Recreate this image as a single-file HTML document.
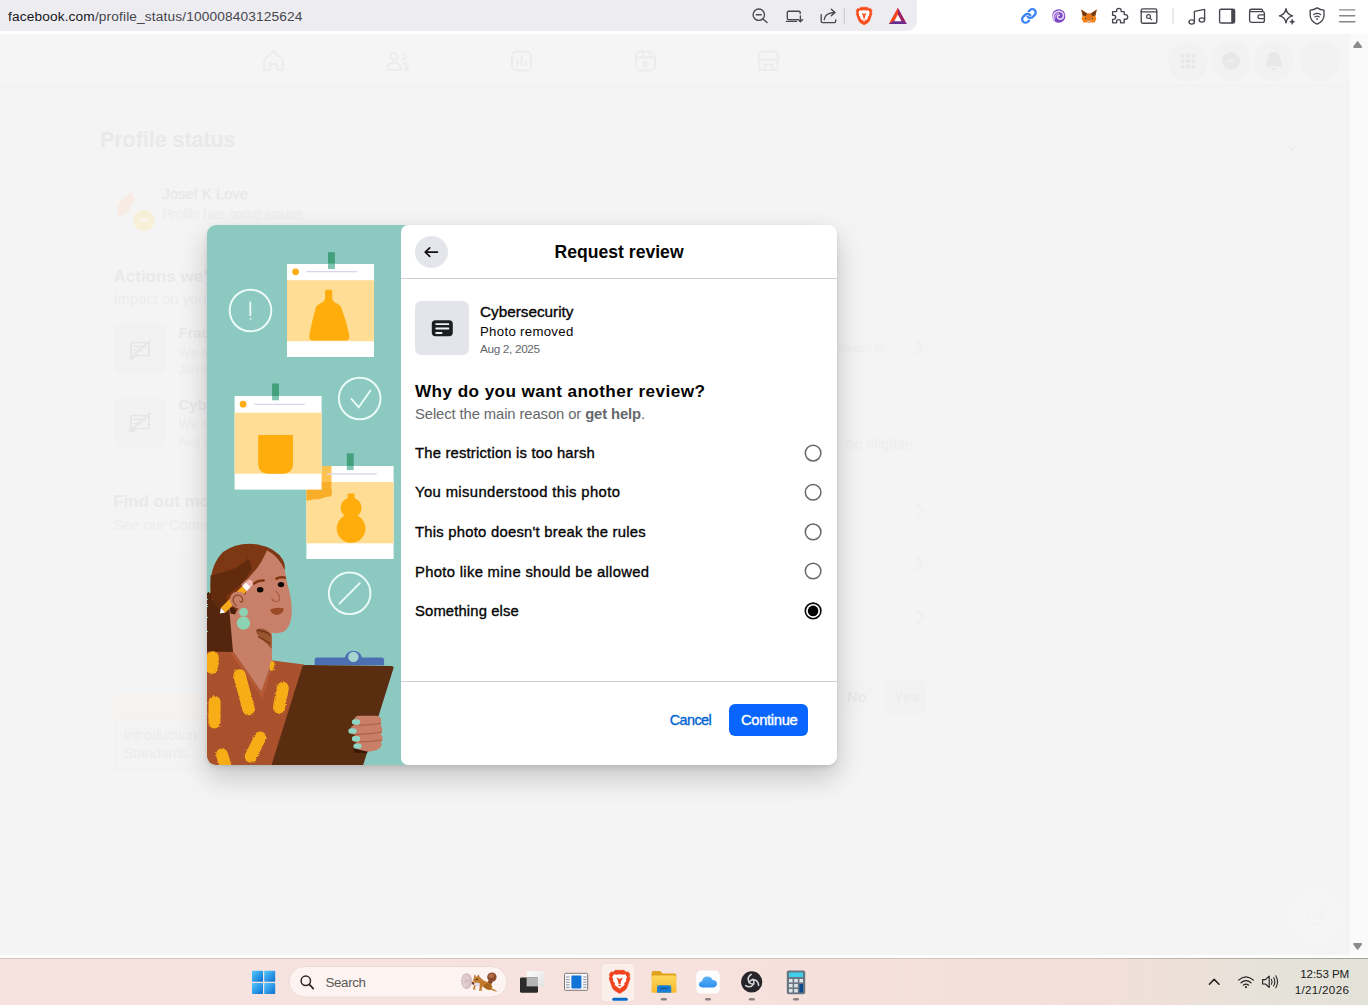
<!DOCTYPE html>
<html lang="en">
<head>
<meta charset="utf-8">
<title>Request review</title>
<style>
*{box-sizing:border-box;margin:0;padding:0}
html,body{width:1368px;height:1005px;overflow:hidden;background:#fdfdfd;font-family:"Liberation Sans",sans-serif;}
body{position:relative}
.abs{position:absolute}
.t{position:absolute;white-space:nowrap;line-height:1;transform-origin:0 0}
/* browser chrome */
#chrome{position:absolute;left:0;top:0;width:1368px;height:34px;background:#fff}
#urlbar{position:absolute;left:0;top:0;width:917px;height:31px;background:#edecf1;border-radius:0 0 10px 0}
/* page */
#page{position:absolute;left:0;top:34px;width:1350px;height:921px;background:#f4f4f4;overflow:hidden}
#scroll{position:absolute;left:1350px;top:34px;width:18px;height:921px;background:#fafafa}
.faint{color:#e9e9e9}
/* modal */
#modal{position:absolute;left:207px;top:225px;width:630px;height:540px;border-radius:9px;background:#fff;box-shadow:0 12px 28px rgba(0,0,0,.2),0 2px 4px rgba(0,0,0,.1);overflow:hidden}
#left{position:absolute;left:0;top:0;width:206px;height:540px;background:#8ccac1}
#right{position:absolute;left:194px;top:0;width:436px;height:540px;background:#fff;border-radius:7px}
.hr{position:absolute;left:0;width:436px;height:1px;background:#ced0d4}
.radio{position:absolute;left:597.5px;width:17.2px;height:17.2px;border-radius:50%;border:1.5px solid #65676b;background:#fff}
.radio.on{border:1.6px solid #0a0a0a}
.radio.on::after{content:"";position:absolute;left:1.7px;top:1.7px;width:10.6px;height:10.6px;border-radius:50%;background:#000}
.opt{font-size:14.8px;color:#050505;-webkit-text-stroke:.35px #050505}
/* taskbar */
#taskbar{position:absolute;left:0;top:958px;width:1368px;height:47px;background:linear-gradient(90deg,#f6e3df 0%,#f6e1dd 55%,#f3dfda 80%,#ebe1d9 88%,#e5e2d9 94%,#e3e2d9 100%);}
</style>
</head>
<body>
<!-- ============ BROWSER CHROME ============ -->
<div id="chrome">
  <div id="urlbar"></div>
  <span class="t" id="url" style="letter-spacing:0.14px;left:8px;top:10px;font-size:13.7px;color:#46464d"><span style="color:#17171c">facebook.com</span>/profile_status/100008403125624</span>
  <!--C-START--><svg class="abs" style="left:0;top:0" width="1368" height="34" viewBox="0 0 1368 34">
  <g fill="none" stroke="#46464e" stroke-width="1.35" stroke-linecap="round" stroke-linejoin="round">
    <!-- zoom out -->
    <circle cx="758.8" cy="14.7" r="5.7"/><path d="M763 19L767 22.6M756.3 14.7H761.3"/>
    <!-- cast / install -->
    <path d="M798 19.6H788.6Q787.3 19.6 787.3 18.3V12.5Q787.3 11.2 788.6 11.2H798.9Q800.2 11.2 800.2 12.5V13.6M786.4 21.4H796.6M800.4 15.8V21.6M798.2 19.6L800.4 21.8L802.6 19.6"/>
    <!-- share -->
    <path d="M821.2 14.6V21.3Q821.2 22.6 822.5 22.6H834.4Q835.7 22.6 835.7 21.3V19.8M824.2 19.6Q825 13 834.4 12.5M831.3 9.2L835 12.5L831.3 15.8"/>
  </g>
  <rect x="843.8" y="8.2" width="1" height="15.6" fill="#c4c4cc"/>
  <!-- brave lion -->
  <path d="M860.600 7.200H867.600L868.900 8.700L870.600 8.400L872 10.400L871.500 12L872.100 13.600L869.600 20.600Q869 22 867.800 22.800L864.100 25L860.400 22.800Q859.200 22 858.600 20.600L856.100 13.600L856.700 12L856.200 10.400L857.600 8.400L859.300 8.700Z" fill="#fb4c1e" stroke="#fb4c1e" stroke-width=".5" stroke-linejoin="round"/>
  <path d="M864.100 10.200L866.600 10.600L868.400 10.300L869.800 12.400L869 14L869.300 15.200L867.600 17.400L867.900 18.600L864.100 21.400L860.300 18.600L860.600 17.400L858.900 15.200L859.200 14L858.400 12.400L859.800 10.300L861.600 10.600Z" fill="#fff"/>
  <path d="M861.600 12.700L864.100 13.900L866.600 12.700L865.300 15.400L864.800 18H863.400L862.900 15.400Z" fill="#fb4c1e"/>
  <path d="M862.700 19L864.100 18.400L865.500 19L864.100 19.700Z" fill="#fb4c1e"/>
  <!-- BAT -->
  <path d="M897.9 7.8L889 24H906.8Z" fill="#9e1f63"/>
  <path d="M897.9 7.8L889 24L897.9 18.4Z" fill="#ff4a1c"/>
  <path d="M889 24H906.8L897.9 18.4Z" fill="#662d91"/>
  <path d="M897.9 14.4L894.3 21.2H901.5Z" fill="#fff"/>
  <!-- link -->
  <g transform="translate(1020.700 7.700) scale(.685)" fill="none" stroke="#3b82f6" stroke-width="3.300" stroke-linecap="round" stroke-linejoin="round">
    <path d="M10 13a5 5 0 0 0 7.540 .540l3-3a5 5 0 0 0-7.070-7.070l-1.720 1.710"/>
    <path d="M14 11a5 5 0 0 0-7.540-.540l-3 3a5 5 0 0 0 7.070 7.070l1.710-1.710"/>
  </g>
  <!-- swirl -->
  <circle cx="1058.7" cy="16" r="6.7" fill="#7a44c2"/>
  <path d="M1053 19.5Q1052.5 12 1058.4 11.2Q1063 11.2 1063.6 15.4Q1063.4 19 1060 19.2Q1057.4 18.8 1057.4 16.6Q1057.8 15 1059.4 15.2" fill="none" stroke="#e6d9f7" stroke-width="1.5" stroke-linecap="round"/>
  <path d="M1054.6 21.4Q1054 14.6 1058.6 13.4" fill="none" stroke="#c9b2ee" stroke-width="1.1" stroke-linecap="round"/>
  <!-- fox -->
  <path d="M1081.2 9.4L1087.2 13.6H1090.8L1096.8 9.4L1095.4 15.6L1096.4 19L1094.4 22.8L1090.6 22.2L1089.8 23H1088.2L1087.4 22.2L1083.6 22.8L1081.6 19L1082.6 15.6Z" fill="#f6851b"/>
  <path d="M1081.2 9.4L1087.2 13.6L1086 16.6L1082.6 15.6Z" fill="#763d16"/>
  <path d="M1096.8 9.4L1090.8 13.6L1092 16.6L1095.4 15.6Z" fill="#763d16"/>
  <path d="M1086 16.6L1087.2 13.6H1090.8L1092 16.6L1090.6 20.8H1087.4Z" fill="#e2761b"/>
  <path d="M1087.4 20.8H1090.6L1090.2 22.6H1087.8Z" fill="#d7c1b3"/>
  <circle cx="1085.6" cy="18.6" r=".7" fill="#233447"/><circle cx="1092.4" cy="18.6" r=".7" fill="#233447"/>
  <g fill="none" stroke="#46464e" stroke-width="1.35" stroke-linecap="round" stroke-linejoin="round">
    <!-- puzzle -->
    <path d="M1116.6 10.6A2.3 2.3 0 0 1 1121.2 10.6V11.6H1124.2V14.6H1125.4A2.3 2.3 0 0 1 1125.4 19.2H1124.2V22.8H1120.6V21.6A2 2 0 0 0 1116.6 21.6V22.8H1112.6V19.4H1113.6A2.1 2.1 0 0 0 1113.6 15.2H1112.6V11.6H1116.6Z"/>
    <!-- tab search -->
    <rect x="1141.2" y="8.8" width="15.6" height="14.4" rx="1.6"/><path d="M1141.2 11.8H1156.8"/><circle cx="1148.5" cy="16.6" r="1.9" stroke-width="1.2"/><path d="M1150 18.1L1151.6 19.7" stroke-width="1.2"/>
    <!-- music -->
    <path d="M1194.4 21.6V11.4L1204.6 9.4V19.6"/><ellipse cx="1191.7" cy="22" rx="2.7" ry="2.1"/><ellipse cx="1201.9" cy="20" rx="2.7" ry="2.1"/>
    <!-- sidebar -->
    <rect x="1219.6" y="9.2" width="15" height="13.8" rx="1.6"/>
    <!-- wallet -->
    <path d="M1249.6 12V20.6Q1249.6 22.4 1251.4 22.4H1262.4Q1264.4 22.4 1264.4 20.4V13.4Q1264.4 11.6 1262.6 11.6H1251.2Q1249.6 11.4 1249.6 10.4Q1249.8 9.2 1251.2 9.2H1261.2Q1262.6 9.2 1262.6 10.6V11.6M1264.4 14.8H1259.6Q1258 14.8 1258 16.6Q1258 18.6 1259.6 18.6H1264.4"/>
    <!-- sparkle -->
    <path d="M1286 8.6Q1286.8 14.4 1292.6 15.8Q1286.8 17 1286 22.8Q1285.2 17 1279.4 15.8Q1285.2 14.4 1286 8.6Z"/>
    <!-- shield -->
    <path d="M1317.1 7.8Q1320.4 9.8 1324 10.2V15.6Q1323.8 21.4 1317.1 24.2Q1310.4 21.4 1310.2 15.6V10.2Q1313.8 9.8 1317.1 7.8Z"/>
    <path d="M1313.6 14.6Q1317.1 12 1320.6 14.6M1315 16.8Q1317.1 15.4 1319.2 16.8" stroke-width="1.2"/>
  </g>
  <path d="M1231.2 9.2H1233Q1234.6 9.2 1234.6 10.8V21.4Q1234.6 23 1233 23H1231.2Z" fill="#46464e"/>
  <path d="M1292.2 19.2Q1292.5 21.4 1294.7 21.8Q1292.5 22.2 1292.2 24.4Q1291.9 22.2 1289.7 21.8Q1291.9 21.4 1292.2 19.2Z" fill="#46464e" stroke="#46464e" stroke-width=".6" stroke-linejoin="round"/>
  <circle cx="1317.1" cy="19" r=".9" fill="#46464e"/>
  <rect x="1172.4" y="8.2" width="1.2" height="15.6" rx=".6" fill="#dcdce2"/>
  <g stroke="#85858c" stroke-width="1.4" stroke-linecap="round"><path d="M1339.6 9.9H1354.8M1339.6 15.8H1354.8M1339.6 21.7H1354.8"/></g>
</svg>
<!--C-END-->
</div>

<!-- ============ PAGE (dimmed) ============ -->
<div id="page">
  <!--P-START--><div class="abs" style="left:0;top:0;width:1350px;height:52px;background:#f5f5f5;border-bottom:1px solid #f1f1f1"></div>
  <svg class="abs" style="left:0;top:0" width="1350" height="921" viewBox="0 34 1350 921">
    <g fill="none" stroke="#ececec" stroke-width="1.8" stroke-linejoin="round" stroke-linecap="round">
      <path d="M264 60L273.5 51.5L283 60V70H277V64H270V70H264Z"/>
      <circle cx="394" cy="56.5" r="3.6"/><path d="M387 70Q387 62.5 394 62.5Q401 62.5 401 70ZM402.5 54A2.8 2.8 0 1 1 402.6 59.5M404.5 69.5H408Q408 63.5 403.5 63"/>
      <rect x="512" y="51.5" width="19" height="19" rx="4.5"/><path d="M517.5 65.5V60M521.5 65.5V56.5M525.5 65.5V61.5"/>
      <rect x="636" y="51.5" width="19" height="19" rx="5"/><path d="M636 57.5H655M642 51.5L644 57.5M649 51.5L651 57.5M643.5 61.5V67L648.5 64.2Z"/>
      <path d="M759.5 58.5V70H777.500V58.5M758 58.500L760.500 51.500H776.500L779 58.500Q777 61 774 59Q771.500 61 768.500 59Q765.500 61 763 59Q760 61 758 58.500ZM764.500 70V64.500H772.500V70"/>
    </g>
    <g fill="#f2f2f2"><circle cx="1188" cy="61" r="20"/><circle cx="1231" cy="61" r="20"/><circle cx="1274" cy="61" r="20"/><circle cx="1320" cy="61" r="20"/></g>
    <g fill="#e8e8e8">
      <g id="g9"><rect x="1180.500" y="53.500" width="4" height="4" rx="1"/><rect x="1186" y="53.500" width="4" height="4" rx="1"/><rect x="1191.500" y="53.500" width="4" height="4" rx="1"/><rect x="1180.500" y="59" width="4" height="4" rx="1"/><rect x="1186" y="59" width="4" height="4" rx="1"/><rect x="1191.500" y="59" width="4" height="4" rx="1"/><rect x="1180.500" y="64.500" width="4" height="4" rx="1"/><rect x="1186" y="64.500" width="4" height="4" rx="1"/><rect x="1191.500" y="64.500" width="4" height="4" rx="1"/></g>
      <circle cx="1231" cy="61" r="9"/>
      <path d="M1274 52Q1280 52 1280.500 59L1282.500 66.500H1265.500L1267.500 59Q1268 52 1274 52ZM1271 68H1277Q1276.500 70.500 1274 70.500Q1271.500 70.500 1271 68Z"/>
    </g>
    <path d="M1226.500 63.500L1229.800 58.800L1232.200 61.200L1235.500 58.500L1232.200 63.200L1229.800 60.800Z" fill="#f3f3f3"/>
    <path d="M1288.500 146.500L1292 150L1295.500 146.500" fill="none" stroke="#ececec" stroke-width="1.6"/>
    <!-- avatar -->
    <path d="M118 217Q115 205 124 197L131.500 192.500L135 199L128.500 212Z" fill="#f8ebe4"/>
    <circle cx="144" cy="220.500" r="10.500" fill="#f8efd8"/><rect x="138.500" y="219" width="11" height="3" rx="1.500" fill="#f6f3ea"/>
    <!-- thumbnails -->
    <rect x="114" y="323" width="52" height="51" rx="7" fill="#f2f2f2"/><rect x="114" y="396" width="52" height="51" rx="7" fill="#f2f2f2"/>
    <g fill="none" stroke="#e6e6e6" stroke-width="1.700" stroke-linejoin="round" stroke-linecap="round">
      <path d="M131 342.500H149V355.500H136.500L131.500 359V355.500H131ZM134.500 346.500H145.500M134.500 350.500H141M129.500 358.500L150.500 340.500"/>
      <path d="M131 415.500H149V428.500H136.500L131.500 432V428.500H131ZM134.500 419.500H145.500M134.500 423.500H141M129.500 431.500L150.500 413.500"/>
      <path d="M916.500 340.500L923 347.500L916.500 354.500M916.500 503L923 510L916.500 517M916.500 556.500L923 563.500L916.500 570.500M916.500 610L923 617L916.500 624" stroke="#eeeeee" stroke-width="1.500"/>
      <path d="M1309 913.500V921.500Q1309 923.500 1311 923.500H1319Q1321 923.500 1321 921.500V917M1313.500 919L1314.500 915L1321.500 908L1324.500 911L1317.500 918Z" stroke="#eeeeee" stroke-width="1.500"/>
    </g>
    <circle cx="1315" cy="916" r="26" fill="#f5f5f5" opacity=".6"/>
    <!-- card -->
    <rect x="114" y="554" width="720" height="217" rx="8" fill="#f3f3f3"/>
    <rect x="114" y="693" width="720" height="26" fill="#f5f2f0"/>
    <rect x="114.500" y="719.500" width="719" height="51" fill="none" stroke="#f0f0f0"/>
    <rect x="837" y="680" width="38" height="36" rx="6" fill="#f3f3f3"/><rect x="884" y="680" width="42" height="36" rx="6" fill="#f2f2f2"/>
    
  </svg>
  <span class="t bgt" id="b1" style="left:100px;top:95.5px;font-size:21.5px;font-weight:700;color:#e9e9e9;letter-spacing:-.05px">Profile status</span>
  <span class="t bgt" id="b2" style="left:162.5px;top:153px;font-size:14.8px;color:#e9e9e9;-webkit-text-stroke:.35px #e9e9e9">Josef K Love</span>
  <span class="t bgt" id="b3" style="left:162.5px;top:173px;font-size:14px;letter-spacing:-.35px;color:#ececec">Profile has some issues</span>
  <span class="t bgt" id="b4" style="left:113.500px;top:233.500px;font-size:17px;font-weight:700;color:#e9e9e9">Actions we’ve taken</span>
  <span class="t bgt" id="b5" style="left:113.500px;top:257.500px;font-size:14.8px;color:#ededed">Impact on your profile</span>
  <span class="t bgt" id="b6" style="left:178.500px;top:291.500px;font-size:14.8px;font-weight:700;color:#e9e9e9">Fraud</span>
  <span class="t bgt" id="b7" style="left:178.500px;top:311.500px;font-size:13px;color:#ececec">We removed</span>
  <span class="t bgt" id="b8" style="left:178.500px;top:329.500px;font-size:12px;color:#eeeeee">Jan 8, 2026</span>
  <span class="t bgt" id="b9" style="left:178.500px;top:363.500px;font-size:14.8px;font-weight:700;color:#e9e9e9">Cybersecurity</span>
  <span class="t bgt" id="b10" style="left:178.500px;top:383px;font-size:13px;color:#ececec">We removed</span>
  <span class="t bgt" id="b11" style="left:178.500px;top:402px;font-size:12px;color:#eeeeee">Aug 2, 2025</span>
  <span class="t bgt" id="b12" style="left:113px;top:459px;font-size:17px;font-weight:700;color:#e9e9e9">Find out more</span>
  <span class="t bgt" id="b13" style="left:113px;top:484px;font-size:14.8px;color:#ededed">See our Community Standards</span>
  <span class="t bgt" id="b14" style="left:124px;top:693.500px;font-size:14.4px;letter-spacing:-.2px;color:#ececec">Introduction</span>
  <span class="t bgt" id="b15" style="left:124px;top:711.500px;font-size:14.4px;letter-spacing:-.2px;color:#ececec">Standards</span>
  <span class="t bgt" id="b16" style="left:838px;top:309px;font-size:11.5px;color:#eeeeee">Switch to</span>
  <span class="t bgt" id="b17" style="left:846px;top:402.500px;font-size:14.8px;color:#eeeeee">be eligible</span>
  <span class="t bgt" id="b18" style="left:847px;top:655.500px;font-size:14.8px;font-weight:700;color:#eaeaea">No</span>
  <span class="t bgt" id="b19" style="left:894px;top:655.500px;font-size:14.8px;font-weight:700;color:#ececec">Yes</span>
<!--P-END-->
</div>
<div id="scroll">
  <svg class="abs" style="left:0;top:0" width="18" height="921" viewBox="1350 34 18 921">
    <path d="M1357 41.400L1353.300 46.600Q1352.700 47.900 1354 47.900H1361.200Q1362.500 47.900 1361.900 46.600L1358.200 41.400Q1357.600 40.700 1357 41.400Z" fill="#8b8b8b"/>
    <path d="M1357 949.600L1353.300 944.400Q1352.700 943.100 1354 943.100H1361.200Q1362.500 943.100 1361.900 944.400L1358.200 949.600Q1357.600 950.300 1357 949.600Z" fill="#8b8b8b"/>
  </svg>
</div>

<!-- ============ MODAL ============ -->
<div id="modal">
  <div id="left">
    <!--ILLUS-START--><svg class="abs" style="left:0;top:0" width="194" height="540" viewBox="207 225 194 540">
  <defs>
    <filter id="rough" x="-10%" y="-10%" width="120%" height="120%"><feTurbulence type="fractalNoise" baseFrequency="0.9" numOctaves="2" seed="3" result="n"/><feDisplacementMap in="SourceGraphic" in2="n" scale="2.6"/></filter>
  </defs>
  <!-- circles -->
  <g fill="none" stroke="#ecfbf8" stroke-width="1.9" stroke-linecap="round" stroke-linejoin="round">
    <circle cx="250.500" cy="310.500" r="20.800"/>
    <path d="M250.300 302.500V315.200" stroke-width="1.800"/><circle cx="250.300" cy="318.900" r=".5" stroke-width="1"/>
    <circle cx="359.700" cy="398.500" r="20.800"/>
    <path d="M351 398.300L358.700 407.300L370.800 390" stroke-width="1.800" stroke-linecap="butt" stroke-linejoin="miter"/>
    <circle cx="349.650" cy="593.300" r="20.800"/>
    <path d="M339.400 603.700L359.800 583.200" stroke-width="1.800"/>
  </g>
  <!-- card 1 -->
  <rect x="287" y="264" width="87" height="93" fill="#fff"/>
  <rect x="287" y="280.2" width="87" height="61" fill="#ffdd95"/>
  <circle cx="295.6" cy="271.8" r="3.4" fill="#fcae14"/>
  <rect x="306" y="271" width="51" height="1.3" fill="#d9d5f1"/>
  <path d="M325.1 291Q325.1 289.8 326.3 289.8H331Q332.2 289.8 332.2 291V298.5Q333 302 337 303.5Q340.5 305 341.5 308.5Q346.5 321 349.2 334.5Q350.2 340.5 345.4 340.5H313.2Q308.4 340.5 309.4 334.5Q312 321 315.600 308.5Q316.600 305 320 303.5Q324.3 302 325.1 298.5Z" fill="#fead0c"/>
  <rect x="328" y="252.2" width="6.9" height="11.6" fill="#43a07c"/><rect x="328" y="263.8" width="6.9" height="5.2" fill="#80c5b1"/>
  <!-- card 3 (behind card 2) -->
  <rect x="306.4" y="466" width="87.2" height="93" fill="#fff"/>
  <rect x="306.4" y="482" width="87.2" height="61.3" fill="#ffdd95"/>
  <path d="M306.4 466H331.5V482H306.4Z" fill="#fdc250"/><path d="M306.4 482H331.6L331.2 487L332 492L331.3 496.3L326 497L320 499L313 499.6L306.4 500.8Z" fill="#f8ae28"/>
  <rect x="326.8" y="473.3" width="50" height="1.3" fill="#d9d5f1"/>
  <path d="M347.6 494.4Q347.6 493.4 348.6 493.4H353.6Q354.6 493.4 354.6 494.4V498.2A10 10 0 0 1 357.6 515.6A14.4 14.4 0 1 1 344.6 515.6A10 10 0 0 1 347.6 498.2Z" fill="#fead0c"/>
  <rect x="346.8" y="453.3" width="6.9" height="12.7" fill="#43a07c"/><rect x="346.8" y="466" width="6.9" height="4.1" fill="#80c5b1"/>
  <!-- card 2 -->
  <rect x="234.6" y="396" width="87" height="93.6" fill="#fff"/>
  <rect x="234.6" y="412.7" width="87" height="61" fill="#ffdd95"/>
  <circle cx="243.1" cy="404.2" r="3.4" fill="#fcae14"/>
  <rect x="254.2" y="403.7" width="50.6" height="1.3" fill="#d9d5f1"/>
  <path d="M258.2 434.9H293V463Q293 473.7 282.5 473.7H268.7Q258.2 473.7 258.2 463Z" fill="#fead0c"/>
  <rect x="272.1" y="383.5" width="6.9" height="12.5" fill="#43a07c"/><rect x="272.1" y="396" width="6.9" height="4.3" fill="#80c5b1"/>
  <!--W-START-->
  <!-- back hair / bun (dark) -->
  <path d="M207 593Q211 591 215 595Q224 598 231 606L237 614L236.5 628Q236 642 233.5 653L207 655Z" fill="#52250c" filter="url(#rough)"/>
  <!-- neck + chest skin -->
  <path d="M229 606L272 628V661L261.3 691.5L233 652Z" fill="#c77f68"/>
  <!-- face -->
  <path d="M267 549.5Q279 556 284.5 568Q286 580 289.5 592Q292.5 604 291.5 616Q290.5 627 284 631.5Q277 634.5 268 632L250 626L232 612L230 596L240 578Z" fill="#c8806a"/>
  <!-- neck shadow/tattoo -->
  <path d="M256.5 629.5Q261 627.5 266 630Q270 632 271.6 635.5L271.6 649Q268 644 263 640.5Q258.5 637 256.5 633Z" fill="#9a5531"/><path d="M257 631Q260 629 262 632Q264 629.8 266 633Q268 631.5 270 635M258.5 637Q263 639 270 643.5" fill="none" stroke="#6e3413" stroke-width="1.3" stroke-linecap="round"/>
  <!-- hair top -->
  <path d="M210.5 592Q209 566 223 552Q238 541.5 258 544.5Q276 548 283 560Q285.5 565 284.6 570Q279 556.5 267 550.2Q258 572 240.5 584.5L228 604Q220 600 212 600Z" fill="#7d3713"/>
  <path d="M210.500 575.500Q222 573 234.900 568.300Q243 564 247.800 558.500Q251 563 251.800 568.500Q246 580 237.800 588L229.900 598.700L224.900 606.600L219.900 610.600L211 596Z" fill="#622b0e"/>
  <path d="M226 596L241 584L246 592L244 600L236 612L229 608Z" fill="#7b3311"/>
  <!-- pencil -->
  <g transform="translate(219.900 613.500) rotate(-45.400)">
    <path d="M0 0L4.800 -3.300V3.300Z" fill="#fff"/>
    <rect x="4.800" y="-3.300" width="30.200" height="6.600" fill="#f7a81b"/>
    <rect x="35" y="-3.300" width="5.500" height="6.600" fill="#fdfdfd"/>
    <path d="M40.500 -3.300H42.600Q45.600 -3.300 45.600 0Q45.600 3.300 42.600 3.300H40.500Z" fill="#f3b9b6"/>
  </g>
  <!-- ear -->
  <path d="M230 600.500Q229.600 593.200 236 591.800Q243 591 246.300 596L247.500 609.500L238.500 608.600Q231.500 607.200 230 600.500Z" fill="#c8806a"/>
  <path d="M236.600 605.700Q232.600 602.600 233.200 598.600Q234.400 595 238 595.200Q241.800 595.600 242.600 599Q243.200 601.800 241.600 602.200Q240.400 602.200 240 601.200" fill="none" stroke="#8e4a24" stroke-width="1.25" stroke-linecap="round"/>
  <path d="M229.800 608L233.500 607.600L236.500 611L235 614.500L230.500 613.500Z" fill="#4a1f09"/>
  <!-- earring -->
  <circle cx="243.600" cy="612.200" r="4.400" fill="#8ed2b4"/><circle cx="243.400" cy="623.200" r="6.600" fill="#8ed2b4"/>
  <!-- brows -->
  <path d="M254 583.6Q258 580 263.6 580.6" fill="none" stroke="#7f3510" stroke-width="2.5" stroke-linecap="round"/>
  <path d="M276.4 578.6Q280.5 576.4 284.8 577.6" fill="none" stroke="#7f3510" stroke-width="2.5" stroke-linecap="round"/>
  <!-- eyes -->
  <ellipse cx="260.2" cy="589.8" rx="3.3" ry="2.7" fill="#0d0705"/><ellipse cx="281" cy="584.6" rx="3.2" ry="2.7" fill="#0d0705"/>
  <!-- nose -->
  <path d="M276 591.5Q280.8 596 279.2 600.4Q277 602.6 273.2 600.6" fill="none" stroke="#a95f43" stroke-width="1.3" stroke-linecap="round"/>
  <circle cx="272.6" cy="599.6" r="1.2" fill="#a95f43"/>
  <!-- mouth -->
  <path d="M270 609.6Q277 606.6 284 608.6Q283 614.4 276.6 615Q271.4 614.6 270 609.6Z" fill="#9a4a25"/>
  <!-- dress -->
  <path d="M207 651.6L233.5 652L261.3 691.5L272.3 660.4L304 664.5L290 765H215Q207 765 207 757Z" fill="#a9502d"/>
  <path d="M233.5 652L261.3 691.5L272.3 660.4L274.5 661L262.5 699L230 652Z" fill="#b55a35"/>
  <!-- yellow strokes -->
  <g fill="none" stroke="#f7ae16" stroke-linecap="round" filter="url(#rough)">
    <path d="M212.600 657.500L212 667.500" stroke-width="12.500"/>
    <path d="M239.600 675.500L248.600 709" stroke-width="12.500"/>
    <path d="M282.800 688L279 707.500" stroke-width="12"/>
    <path d="M214.600 702L214.400 722.500" stroke-width="12"/>
    <path d="M260.200 737.500L250.800 756.500" stroke-width="12"/>
    <path d="M222 754.500L226 768" stroke-width="12"/>
    <path d="M272.400 663.500L271.800 668.500" stroke-width="4.400"/>
  </g>
  <!-- clipboard -->
  <path d="M314.6 665.3V659.8Q314.6 657.4 317 657.4H345A8.6 8.6 0 0 1 361.8 657.4H381.7Q384.1 657.4 384.1 659.8V665.3Z" fill="#4c6fb4"/>
  <circle cx="353.4" cy="656.9" r="5.2" fill="#a4d5cf"/>
  <path d="M304.5 665.1L391.6 666Q394.2 666.1 393.4 668.6L363.2 765H271.5L302.2 667Q302.8 665.1 304.5 665.1Z" fill="#5a2d11"/>
  <!-- hand -->
  <path d="M353.500 747.500L361 748.500L368.500 751.500L366 753.500L354 752.500Z" fill="#3a1a08"/>
  <g fill="#c97f67">
    <rect x="354" y="715.800" width="27" height="9.800" rx="4.600"/>
    <rect x="350.600" y="725" width="31.600" height="9.800" rx="4.600"/>
    <rect x="354" y="734.200" width="28.600" height="8.400" rx="4"/>
    <path d="M359.500 741.600H377Q381.600 741.600 381.600 745Q381 749 374 750.800L368.200 751.800L358.500 749.500Q355.400 748.500 355.400 745.600Q355.400 741.600 359.500 741.600Z"/>
    <rect x="364" y="718" width="17" height="28" />
  </g>
  <path d="M359 725.300Q371 725 381 723.400M356 734.500Q371 734.200 382 732M359 742Q371 741.600 382 740.200" fill="none" stroke="#a9603f" stroke-width="1"/>
  <g fill="#8fd6c4">
    <rect x="351.900" y="719.200" width="8.300" height="5.600" rx="2.800"/>
    <rect x="348.400" y="728.200" width="8.200" height="5.600" rx="2.800"/>
    <rect x="351.900" y="736" width="8.300" height="5.400" rx="2.700"/>
    <rect x="353.400" y="743.500" width="8.200" height="5.200" rx="2.600"/>
  </g>
<!--W-END-->
</svg>
<!--ILLUS-END-->
  </div>
  <div id="right"></div>
  <!-- header -->
  <div class="abs" style="left:208px;top:11px;width:33px;height:32.4px;border-radius:50%;background:#e4e6eb"></div>
  <svg class="abs" style="left:208px;top:11px" width="33" height="33" viewBox="0 0 33 33"><path d="M22.6 16.1H10.4M14.7 11.8L10.2 16.1L14.7 20.400" fill="none" stroke="#111" stroke-width="1.6" stroke-linecap="round" stroke-linejoin="round"/></svg>
  <span class="t" id="title" style="left:347.5px;top:18.6px;font-size:17.6px;font-weight:700;color:#050505">Request review</span>
  <div class="hr" style="left:194px;top:53px"></div>
  <!-- item -->
  <div class="abs" style="left:208px;top:76px;width:54px;height:54px;border-radius:6px;background:#e3e5ea"></div>
  <svg class="abs" style="left:224px;top:94px" width="23" height="19" viewBox="0 0 23 19"><rect x="0.8" y="1.2" width="21" height="16" rx="3.6" fill="#1c1e21"/><rect x="4.4" y="4.2" width="13.8" height="1.9" rx=".6" fill="#f1f2f4"/><rect x="4.4" y="8.5" width="13.8" height="1.9" rx=".6" fill="#f1f2f4"/><rect x="4.4" y="13" width="7" height="1.9" rx=".6" fill="#f1f2f4"/></svg>
  <span class="t" id="i1" style="left:273px;top:79px;font-size:15.3px;color:#050505;-webkit-text-stroke:.35px #050505">Cybersecurity</span>
  <span class="t" id="i2" style="letter-spacing:0.32px;left:273px;top:100px;font-size:13.2px;color:#050505">Photo removed</span>
  <span class="t" id="i3" style="letter-spacing:-0.35px;left:273px;top:118.9px;font-size:11.8px;color:#65676b">Aug 2, 2025</span>
  <!-- question -->
  <span class="t" id="q1" style="letter-spacing:0.4px;left:208px;top:157.8px;font-size:17.2px;font-weight:700;color:#050505">Why do you want another review?</span>
  <span class="t" id="q2" style="letter-spacing:-0.1px;left:208px;top:181.5px;font-size:14.8px;color:#65676b">Select the main reason or <b style="font-weight:700">get help</b>.</span>
  <!-- options -->
  <span class="t opt" id="o1" style="letter-spacing:0.2px;left:208px;top:220.6px">The restriction is too harsh</span>
  <span class="t opt" id="o2" style="letter-spacing:0.39px;left:208px;top:259.6px">You misunderstood this photo</span>
  <span class="t opt" id="o3" style="letter-spacing:0.25px;left:208px;top:299.5px">This photo doesn't break the rules</span>
  <span class="t opt" id="o4" style="letter-spacing:0.32px;left:208px;top:339.5px">Photo like mine should be allowed</span>
  <span class="t opt" id="o5" style="letter-spacing:0.14px;left:208px;top:378.5px">Something else</span>
  <svg class="abs" style="left:590px;top:210px" width="36" height="200" viewBox="797 435 36 200">
    <g fill="#fff" stroke="#65676b" stroke-width="1.5"><circle cx="813.1" cy="453.100" r="7.800"/><circle cx="813.1" cy="492.300" r="7.800"/><circle cx="813.1" cy="531.900" r="7.800"/><circle cx="813.1" cy="571" r="7.800"/></g>
    <circle cx="813.1" cy="610.900" r="7.800" fill="#fff" stroke="#0a0a0a" stroke-width="1.600"/><circle cx="813.1" cy="610.900" r="5.300" fill="#000"/>
  </svg>
  <div class="hr" style="left:194px;top:456px"></div>
  <!-- footer -->
  <span class="t" id="cancel" style="letter-spacing:-0.6px;left:462.8px;top:488px;font-size:14.4px;color:#0064d1;-webkit-text-stroke:.35px #0064d1">Cancel</span>
  <div class="abs" style="left:522px;top:479px;width:79px;height:32px;border-radius:6px;background:#0866ff"></div>
  <span class="t" id="cont" style="letter-spacing:-0.35px;left:534px;top:488px;font-size:14.8px;color:#fff;-webkit-text-stroke:.35px #fff">Continue</span>
</div>

<!-- ============ TASKBAR ============ -->
<div id="taskbar">
  <div class="abs" style="left:0;top:0;width:1368px;height:1px;background:linear-gradient(90deg,#d3c4c1 0%,#d0c2bf 80%,#b0aca6 90%,#a3a19b 100%)"></div>
  <!--T-START--><svg class="abs" style="left:0;top:0" width="1368" height="47" viewBox="0 958 1368 47">
  <defs>
    <linearGradient id="wl" x1="0" y1="0" x2="1" y2="1"><stop offset="0" stop-color="#55c8ff"/><stop offset="1" stop-color="#0a6fd0"/></linearGradient>
    <linearGradient id="tv" x1="0" y1="0" x2="1" y2="1"><stop offset="0" stop-color="#fcfcfc"/><stop offset="1" stop-color="#e2e2e2"/></linearGradient>
    <linearGradient id="fy" x1="0" y1="0" x2="0" y2="1"><stop offset="0" stop-color="#ffd75e"/><stop offset="1" stop-color="#f7b92b"/></linearGradient>
    <linearGradient id="ic" x1="0" y1="0" x2="0" y2="1"><stop offset="0" stop-color="#5ab5f7"/><stop offset="1" stop-color="#2f8fee"/></linearGradient>
  </defs>
  <!-- windows logo -->
  <g fill="url(#wl)"><rect x="252" y="970.8" width="11" height="11" rx=".8"/><rect x="264.2" y="970.8" width="11" height="11" rx=".8"/><rect x="252" y="983" width="11" height="11" rx=".8"/><rect x="264.2" y="983" width="11" height="11" rx=".8"/></g>
  <!-- search pill -->
  <rect x="289" y="966.5" width="218" height="30.6" rx="15.3" fill="#fdf4f1" stroke="#ecd9d5" stroke-width="1"/>
  <circle cx="305.8" cy="980.8" r="4.7" fill="none" stroke="#2a2726" stroke-width="1.5"/><path d="M309.3 984.4L313.3 988.6" stroke="#2a2726" stroke-width="1.7" stroke-linecap="round"/>
  <!-- mushroom + squirrel -->
  <ellipse cx="466.600" cy="981.100" rx="5.600" ry="7.900" fill="#d8bec4"/>
  <ellipse cx="465.800" cy="981.100" rx="3.600" ry="6.300" fill="#e6d3d7"/>
  <g stroke="#c9a9b1" stroke-width=".5" fill="none"><path d="M466 974.500L467 988M463 977L470.500 985.500M462.500 984.500L471 977.500M461.500 981H472"/></g>
  <path d="M471.800 981.500L474.600 982.600L474 985L471.800 984Z" fill="#7a3b22"/>
  <path d="M474.800 974.200L476 976.600L474 977.200ZM478.200 974.200L479.600 976.800L477.400 977.200Z" fill="#a55a26"/>
  <path d="M473 980.200Q473.400 976.600 477 976.400Q480.600 976.600 482.400 979.400Q485.400 982 489 982Q492.600 984 492.200 988.400Q494.600 989.600 497.400 991.400Q494 991.800 491.400 989.800Q487.600 990.600 484.800 988L482.600 986.600L481.400 989.600L482.600 990.800H479L479.800 986.400L478 984.400L475.400 986.400L474.800 988.200L476 989.400H472.800L474 985.800L475.800 982.800Q473.400 982.600 473 980.200Z" fill="#c27a2c"/>
  <path d="M484 984.500Q488 982.500 491 985Q492 988 489.500 989.500Q486 989.500 484 987Z" fill="#a9651f"/>
  <ellipse cx="477.400" cy="984.600" rx="2.600" ry="2.100" fill="#e4dcea"/>
  <path d="M488.400 982.800Q487.600 980.600 489.600 980.600L493 981.400L491.400 984Z" fill="#7c3f1f"/>
  <circle cx="491.900" cy="977.100" r="4.700" fill="#8c4a2b"/>
  <ellipse cx="491.300" cy="975.700" rx="2.800" ry="2.200" fill="#b06b47"/>
  <ellipse cx="476.800" cy="979.400" rx=".9" ry=".7" fill="#2b2350"/>
  <!-- task view -->
  <rect x="526.6" y="971" width="17.2" height="15.6" rx="1.2" fill="url(#tv)"/>
  <rect x="520" y="977.4" width="18" height="15.4" rx="1.4" fill="#2a2a2a"/>
  <rect x="526.600" y="977.400" width="11.400" height="9" fill="#b4b4b4"/>
  <!-- widgets -->
  <rect x="564.500" y="973.300" width="23.200" height="17" rx="1" fill="#f7f8fa" stroke="#7d7775" stroke-width="1"/>
  <rect x="571.4" y="975.6" width="10" height="12.8" rx=".8" fill="#1273d6"/>
  <g stroke="#7b8694" stroke-width=".9"><path d="M566 977H569.6M566 979.6H569.6M566 982.2H569.6M566 984.8H569.6M566 987.4H569.6M583.2 977H586.6M583.2 979.6H586.6M583.2 982.2H586.6M583.2 984.8H586.6M583.2 987.4H586.6"/></g>
  <!-- brave active -->
  <rect x="601" y="963.4" width="34" height="38.4" rx="4" fill="#fbefec" stroke="#efdcd8" stroke-width=".8"/>
  <g transform="translate(619.600 982) scale(1.300) translate(-864.100 -16.200)">
    <path d="M860.600 7.200H867.600L868.900 8.700L870.600 8.400L872 10.400L871.500 12L872.100 13.600L869.600 20.600Q869 22 867.800 22.800L864.100 25L860.400 22.800Q859.200 22 858.600 20.600L856.100 13.600L856.700 12L856.200 10.400L857.600 8.400L859.300 8.700Z" fill="#f0441f" stroke="#f0441f" stroke-width=".5" stroke-linejoin="round"/>
  <path d="M864.100 10.200L866.600 10.600L868.400 10.300L869.800 12.400L869 14L869.300 15.200L867.600 17.400L867.900 18.600L864.100 21.400L860.300 18.600L860.600 17.400L858.900 15.200L859.200 14L858.400 12.400L859.800 10.300L861.600 10.600Z" fill="#fff"/>
  <path d="M861.600 12.700L864.100 13.900L866.600 12.700L865.300 15.400L864.800 18H863.400L862.900 15.400Z" fill="#f0441f"/>
  <path d="M862.700 19L864.100 18.400L865.500 19L864.100 19.700Z" fill="#f0441f"/>
  </g>
  <rect x="612.2" y="997.8" width="15.6" height="3" rx="1.5" fill="#0a6cc8"/>
  <!-- folder -->
  <path d="M651.6 973Q651.6 971 653.6 971H660.2L662.6 973.4H674.4Q676.4 973.4 676.4 975.4V978H651.6Z" fill="#e0a21b"/>
  <rect x="651.6" y="975.6" width="24.8" height="17.2" rx="1.6" fill="url(#fy)"/>
  <path d="M657 992.8V987Q657 985.2 658.8 985.2H669.4Q671.2 985.2 671.2 987V992.8Z" fill="#1b7fd6"/>
  <rect x="659.6" y="987.6" width="9" height="1.6" rx=".8" fill="#0f5ea8"/>
  <!-- icloud -->
  <rect x="696.2" y="970.4" width="23.6" height="23.2" rx="5" fill="#fdfdfd"/>
  <path d="M702.6 987.4Q698.8 987.2 698.9 984Q699.2 981.4 702 981.2Q702.6 976.6 707.4 976.4Q711.2 976.4 712.6 980Q716.8 980.2 717 983.8Q716.8 987.2 713.4 987.4Z" fill="url(#ic)"/>
  <!-- obs -->
  <circle cx="751.7" cy="981.9" r="10.6" fill="#27252a"/>
  <g fill="none" stroke="#d8d8d8" stroke-width="1.5" stroke-linecap="round"><path d="M751.2 974.4Q746.4 977.4 749.2 982.4Q751 984.4 753.6 983.8"/><path d="M758.6 985.4Q758.2 979.6 752.6 979.4Q750 980 749.2 982.6"/><path d="M745.6 985.6Q750.6 988.6 753.8 983.8Q754.6 981.2 752.8 979.4"/></g>
  <!-- calculator -->
  <rect x="786.8" y="970.4" width="18.4" height="23.8" rx="1.8" fill="#6a7582"/>
  <rect x="789" y="972.4" width="14" height="4.6" rx=".6" fill="#3fd0ee"/>
  <g fill="#dfe4e8"><rect x="789" y="979" width="3.6" height="3.4"/><rect x="794.2" y="979" width="3.6" height="3.4"/><rect x="799.4" y="979" width="3.6" height="3.4"/><rect x="789" y="984" width="3.6" height="3.4"/><rect x="794.2" y="984" width="3.6" height="3.4"/><rect x="789" y="989" width="3.6" height="3.4"/><rect x="794.2" y="989" width="3.6" height="3.4"/></g>
  <rect x="799.4" y="984" width="3.6" height="8.4" fill="#0b4a8f"/>
  <!-- running dots -->
  <g fill="#8c8482"><rect x="660.8" y="998" width="6" height="2.6" rx="1.3"/><rect x="705" y="998" width="6" height="2.6" rx="1.3"/><rect x="748.8" y="998" width="6" height="2.6" rx="1.3"/><rect x="793" y="998" width="6" height="2.6" rx="1.3"/></g>
  <!-- tray -->
  <g fill="none" stroke="#1f1f1f" stroke-linecap="round" stroke-linejoin="round">
    <path d="M1209.4 984.2L1214.2 979.4L1219 984.2" stroke-width="1.5"/>
    <path d="M1238.6 980.2Q1246 973.4 1253.4 980.2M1241 982.8Q1246 978.4 1251 982.8M1243.4 985.2Q1246 983 1248.6 985.2" stroke-width="1.15"/>
    <path d="M1262.6 979.6H1265.4L1269.2 976.2V987.4L1265.4 984H1262.6Z" stroke-width="1.1"/>
    <path d="M1271.4 979.4Q1272.8 981.8 1271.4 984.2M1273.6 977.6Q1276 981.8 1273.6 986M1275.8 975.8Q1279.2 981.8 1275.8 987.8" stroke-width="1.05"/>
  </g>
  <circle cx="1246" cy="987" r="1.05" fill="#1f1f1f"/>
</svg>
<span class="t" id="srch" style="left:325.5px;top:17.6px;font-size:13.4px;letter-spacing:-.4px;color:#5e5957">Search</span>
<span class="t" id="tm" style="right:18.8px;top:10.3px;font-size:11.6px;color:#1b1b1b;letter-spacing:-.08px">12:53 PM</span>
<span class="t" id="dt" style="right:18.8px;top:26.2px;font-size:11.6px;color:#1b1b1b;letter-spacing:.33px">1/21/2026</span>
<!--T-END-->
</div>
</body>
</html>
